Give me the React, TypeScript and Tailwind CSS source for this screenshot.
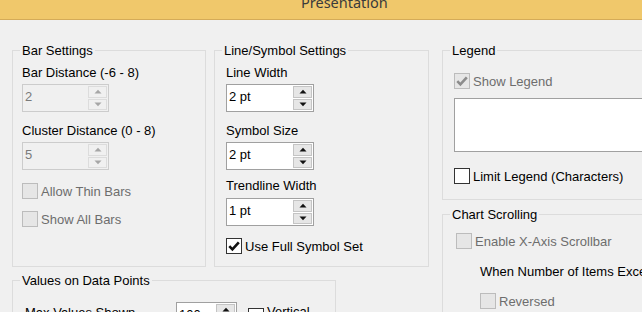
import type { ReactNode } from "react";

const Arrow = ({ up, color }: { up?: boolean; color: string }) => (
  <svg width="8" height="5" viewBox="0 0 8 5">
    <path d={up ? "M0.5 4.5 L4 0.8 L7.5 4.5 Z" : "M0.5 0.5 L4 4.2 L7.5 0.5 Z"} fill={color} />
  </svg>
);

const Spin = ({ value, disabled, width }: { value: string; disabled?: boolean; width: string }) => {
  const btn = disabled
    ? "border-[#dcdcdc] bg-[#f0f0f0]"
    : "border-[#c4c4c4] bg-[#e6e6e6]";
  const arrow = disabled ? "#a6a6a6" : "#111111";
  return (
    <div
      className={`flex h-[28px] border ${width} ${
        disabled ? "border-[#cccccc] bg-[#f0f0f0] text-[#7a7a7a]" : "border-[#a0a0a0] bg-white text-black"
      }`}
    >
      <div className="flex-1 pl-[2px] pt-[4px] leading-[15px]">{value}</div>
      <div className="flex w-[21px] flex-col gap-[1px] p-[1px]">
        <div className={`flex flex-1 items-center justify-center border ${btn}`}>
          <Arrow up color={arrow} />
        </div>
        <div className={`flex flex-1 items-center justify-center border ${btn}`}>
          <Arrow color={arrow} />
        </div>
      </div>
    </div>
  );
};

const Box = ({ checked, disabled }: { checked?: boolean; disabled?: boolean }) => (
  <div
    className={`flex h-[16px] w-[16px] shrink-0 items-center justify-center border ${
      disabled ? "border-[#bcbcbc] bg-[#e6e6e6]" : "border-[#333333] bg-white"
    }`}
  >
    {checked && (
      <svg width="14" height="14" viewBox="0 0 14 14">
        <path
          d="M2.3 7.2 L5.4 10.4 L11.8 3.4"
          fill="none"
          stroke={disabled ? "#8c8c8c" : "#111111"}
          strokeWidth="2.6"
        />
      </svg>
    )}
  </div>
);

const Check = ({
  label,
  checked,
  disabled,
  className = "",
}: {
  label: string;
  checked?: boolean;
  disabled?: boolean;
  className?: string;
}) => (
  <div className={`flex h-[16px] items-center gap-[3px] ${className}`}>
    <Box checked={checked} disabled={disabled} />
    <span className={`leading-[15px] whitespace-nowrap ${disabled ? "text-[#6d6d6d]" : "text-black"}`}>{label}</span>
  </div>
);

// group box: title sits on the top line, inner div carries the padding
const Group = ({
  title,
  className,
  innerClass,
  children,
}: {
  title: string;
  className: string;
  innerClass: string;
  children: ReactNode;
}) => (
  <fieldset className={`border border-[#dcdcdc] ${className}`}>
    <legend className="ml-[7px] px-[2px] leading-[15px] text-black">{title}</legend>
    <div className={innerClass}>{children}</div>
  </fieldset>
);

const Label = ({ children, className = "" }: { children: ReactNode; className?: string }) => (
  <div className={`leading-[15px] text-black whitespace-nowrap ${className}`}>{children}</div>
);

export default function App() {
  return (
    <div className="h-[312px] w-[642px] overflow-hidden bg-[#f0f0f0] font-['Liberation_Sans',Arial,sans-serif] text-[13px]">
      <div className="h-[20px] overflow-hidden border-b border-[#d4ab58] bg-[#f0c86b] pl-[301px]">
        <div className="-mt-[8px] font-['Noto_Sans',sans-serif] text-[14.5px] leading-[20px] text-[#3b3b3b]">
          Presentation
        </div>
      </div>

      <div className="flex pt-[23px]">
        <div className="flex w-[430px] shrink-0 flex-col pl-[12px]">
          <div className="flex gap-[8px]">
            <Group title="Bar Settings" className="h-[224px] w-[194px]" innerClass="pl-[9px] pt-[7px]">
              <Label>Bar Distance (-6 - 8)</Label>
              <div className="mt-[4px]">
                <Spin value="2" disabled width="w-[87px]" />
              </div>
              <Label className="mt-[11px]">Cluster Distance (0 - 8)</Label>
              <div className="mt-[4px]">
                <Spin value="5" disabled width="w-[87px]" />
              </div>
              <Check label="Allow Thin Bars" disabled className="mt-[13px]" />
              <Check label="Show All Bars" disabled className="mt-[12px]" />
            </Group>

            <Group title="Line/Symbol Settings" className="h-[224px] w-[215px]" innerClass="pl-[11px] pt-[7px]">
              <Label>Line Width</Label>
              <div className="mt-[4px]">
                <Spin value="2 pt" width="w-[88px]" />
              </div>
              <Label className="mt-[11px]">Symbol Size</Label>
              <div className="mt-[4px]">
                <Spin value="2 pt" width="w-[88px]" />
              </div>
              <Label className="mt-[8px]">Trendline Width</Label>
              <div className="mt-[5px]">
                <Spin value="1 pt" width="w-[88px]" />
              </div>
              <Check label="Use Full Symbol Set" checked className="mt-[12px]" />
            </Group>
          </div>

          <Group title="Values on Data Points" className="mt-[6px] h-[80px] w-[324px]" innerClass="pl-[12px] pt-[14px]">
            <div className="flex h-[28px] items-start">
              <Label className="mt-[3px] w-[151px]">Max Values Shown</Label>
              <Spin value="100" width="w-[61px]" />
              <div className="ml-[11px] mt-[6px]">
                <Box />
              </div>
              <Label className="ml-[3px] mt-[2px]">Vertical</Label>
            </div>
          </Group>
        </div>

        <div className="flex w-[220px] shrink-0 flex-col pl-[12px]">
          <Group title="Legend" className="h-[157px] w-[230px]" innerClass="pl-[11px] pt-[15px]">
            <Check label="Show Legend" checked disabled />
            <div className="mt-[9px] h-[54px] w-[220px] border border-[#a0a0a0] bg-white" />
            <Check label="Limit Legend (Characters)" className="mt-[16px]" />
          </Group>

          <Group title="Chart Scrolling" className="mt-[7px] h-[120px] w-[230px]" innerClass="pl-[13px] pt-[11px]">
            <Check label="Enable X-Axis Scrollbar" disabled />
            <Label className="ml-[24px] mt-[15px]">When Number of Items Exceeds</Label>
            <Check label="Reversed" disabled className="ml-[24px] mt-[14px]" />
          </Group>
        </div>
      </div>
    </div>
  );
}
